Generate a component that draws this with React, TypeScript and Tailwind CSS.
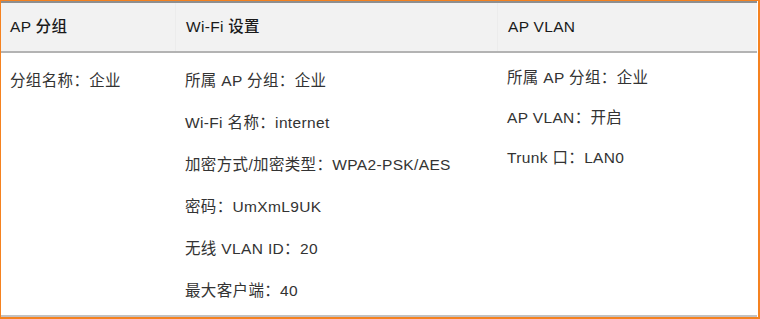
const headers = ["AP 分组", "Wi-Fi 设置", "AP VLAN"];

const groupCol = ["分组名称：企业"];
const wifiCol = [
  "所属 AP 分组：企业",
  "Wi-Fi 名称：internet",
  "加密方式/加密类型：WPA2-PSK/AES",
  "密码：UmXmL9UK",
  "无线 VLAN ID：20",
  "最大客户端：40",
];
const vlanCol = ["所属 AP 分组：企业", "AP VLAN：开启", "Trunk 口：LAN0"];

export default function App() {
  return (
    <div
      className="w-[760px] h-[319px] border-t border-l border-r-2 border-b-2 border-[#f58220] bg-white flex flex-col text-[15.5px] text-[#333]"
      style={{ fontFamily: '"Liberation Sans", "Noto Sans CJK SC", sans-serif' }}
    >
      {/* header row */}
      <div className="grid grid-cols-[174px_322px_1fr] h-[52px] bg-[#f2f2f2] border-t-2 border-[#8f8f8f] border-b-2 border-b-[#b3b3b3] mr-px">
        {headers.map((h, i) => (
          <div
            key={h}
            className={`flex items-center text-[#1a1a1a] font-medium tracking-[0.3px] ${i === 0 ? "pl-[9px]" : "pl-[10px] border-l border-[#ececec]"}`}
          >
            {h}
          </div>
        ))}
      </div>

      {/* body row */}
      <div className="grid grid-cols-[174px_322px_1fr] flex-1 border-b-2 border-[#c2c2c2] mr-px tracking-[0.35px]">
        <div className="pl-[9px] pt-[18px] flex flex-col">
          {groupCol.map((t) => (
            <div key={t} className="leading-[20px]">{t}</div>
          ))}
        </div>
        <div className="pl-[10px] pt-[18px] flex flex-col gap-[22px]">
          {wifiCol.map((t) => (
            <div key={t} className="leading-[20px]">{t}</div>
          ))}
        </div>
        <div className="pl-[10px] pt-[15px] flex flex-col gap-[20px]">
          {vlanCol.map((t) => (
            <div key={t} className="leading-[20px]">{t}</div>
          ))}
        </div>
      </div>
    </div>
  );
}
